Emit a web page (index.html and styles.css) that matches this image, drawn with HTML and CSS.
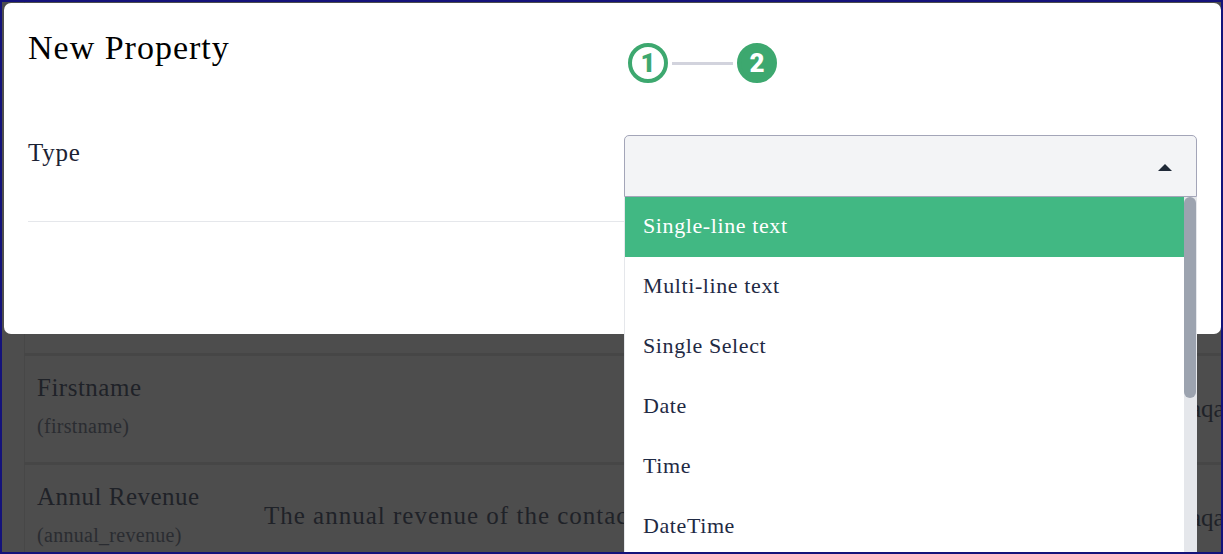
FILE: index.html
```html
<!DOCTYPE html>
<html lang="en">
<head>
<meta charset="utf-8">
<title>New Property</title>
<link rel="stylesheet" href="styles.css">
</head>
<body>
<div class="frame">
  <main class="page">
    <div class="row-spacer"></div>
    <div class="row">
      <div class="cell-name">
        <div class="name">Firstname</div>
        <div class="key">(firstname)</div>
      </div>
      <div class="cell-desc"></div>
      <div class="cell-extra">aqa</div>
    </div>
    <div class="row">
      <div class="cell-name">
        <div class="name">Annul Revenue</div>
        <div class="key">(annual_revenue)</div>
      </div>
      <div class="cell-desc">The annual revenue of the contact</div>
      <div class="cell-extra">aqa</div>
    </div>
  </main>
  <section class="modal">
    <header class="modal-head">
      <h1 class="title">New Property</h1>
      <div class="stepper">
        <span class="step step-done">1</span>
        <span class="step-line"></span>
        <span class="step step-current">2</span>
      </div>
    </header>
    <div class="form-row">
      <label class="field-label">Type</label>
    </div>
  </section>
  <div class="select">
    <div class="select-box"><span class="caret"></span></div>
    <div class="dropdown">
      <ul class="options">
        <li class="option option-active">Single-line text</li>
        <li class="option">Multi-line text</li>
        <li class="option">Single Select</li>
        <li class="option">Date</li>
        <li class="option">Time</li>
        <li class="option">DateTime</li>
      </ul>
      <div class="scroll-track"><div class="scroll-thumb"></div></div>
    </div>
  </div>
</div>
</body>
</html>
```
FILE: styles.css
```css
* { box-sizing: border-box; }
html, body { margin: 0; padding: 0; height: 100%; }
body { font-family: "Liberation Serif", "Times New Roman", serif; overflow: hidden; }

.frame {
  position: relative;
  width: 1223px;
  height: 554px;
  border: 2px solid #14127a;
  background: #4d4d4d;
  overflow: hidden;
}

.page { padding-left: 22px; }
.row-spacer { height: 351px; margin-left: 0; border-left: 1px solid #474747; }
.row {
  display: flex;
  height: 109px;
  border-left: 1px solid #474747;
  border-top: 3px solid #464646;
  color: #1f2228;
  white-space: nowrap;
}
.cell-name { width: 239px; padding: 17px 0 0 12px; flex: none; }
.name { font-size: 25px; line-height: 30px; letter-spacing: .5px; }
.key { font-size: 20px; line-height: 30px; margin-top: 8px; letter-spacing: .3px; color: #2a2c31; }
.cell-desc { width: 926px; flex: none; font-size: 25px; padding-top: 36px; line-height: 30px; letter-spacing: 1px; }
.cell-extra { font-size: 25px; padding-top: 38px; line-height: 30px; }

.modal {
  position: absolute;
  left: 2px;
  top: 1px;
  width: 1217px;
  height: 331px;
  background: #fff;
  border-radius: 7px;
  padding: 0 24px;
}
.modal-head { display: flex; height: 129px; align-items: flex-start; }
.title {
  margin: 25px 0 0;
  width: 600px;
  flex: none;
  font-size: 34px;
  line-height: 40px;
  letter-spacing: 1px;
  font-weight: 400;
  color: #000;
}
.stepper { display: flex; align-items: center; margin-top: 40px; }
.step {
  width: 40px;
  height: 40px;
  border-radius: 50%;
  display: flex;
  align-items: center;
  justify-content: center;
  font: 900 26px/1 Roboto, sans-serif;
  border: 4px solid #3da86f;
}
.step-done { color: #3da86f; background: #fff; }
.step-current { color: #fff; background: #3da86f; }
.step-line { width: 61px; height: 3px; margin: 0 4px; background: #d2d3dd; }

.form-row {
  height: 90px;
  padding-top: 6px;
  border-bottom: 1px solid #e5e7eb;
}
.field-label { font-size: 25px; line-height: 30px; letter-spacing: .7px; color: #1c2233; }

.select {
  position: absolute;
  left: 622px;
  top: 133px;
  width: 573px;
}
.select-box {
  height: 62px;
  background: #f3f4f6;
  border: 1px solid #a3a5b8;
  border-radius: 5px 5px 0 0;
  display: flex;
  align-items: center;
  justify-content: flex-end;
  padding: 0 24px 0 0;
}
.caret {
  width: 0;
  height: 0;
  margin-top: 3px;
  border-left: 7px solid transparent;
  border-right: 7px solid transparent;
  border-bottom: 7px solid #1f2937;
}
.dropdown {
  position: relative;
  height: 357px;
  overflow: hidden;
  background: #fff;
  border-left: 1px solid #e5e7eb;
}
.options {
  list-style: none;
  margin: 0;
  padding: 0 13px 0 0;
}
.option {
  height: 60px;
  display: flex;
  align-items: center;
  padding: 0 0 2px 18px;
  font-size: 22px;
  letter-spacing: .6px;
  color: #1f2a44;
}
.option-active { background: #41b883; color: #fff; }
.scroll-track {
  position: absolute;
  top: 0;
  right: 0;
  bottom: 0;
  width: 13px;
  background: #e5e7eb;
}
.scroll-thumb {
  width: 12px;
  height: 201px;
  background: #9ca3af;
  border-radius: 6px;
}
```
